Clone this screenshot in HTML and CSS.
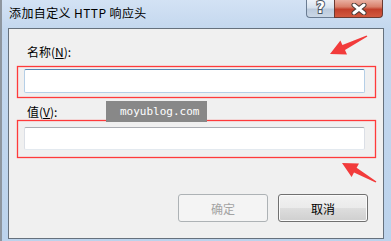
FILE: index.html
```html
<!DOCTYPE html>
<html lang="zh-CN">
<head>
    <meta charset="UTF-8">
    <title>添加自定义 HTTP 响应头</title>
    <link rel="stylesheet" href="styles.css">
</head>
<body>
    <div class="window">
        <div class="titlebar">
            <span class="title">添加自定义 HTTP 响应头</span>
            <div class="caption-buttons">
                <div class="help-btn"><span>?</span></div>
                <div class="close-btn">
                    <svg width="20" height="12" viewBox="0 0 20 12">
                        <path d="M5 2 L15 10 M15 2 L5 10" stroke="#4a3a36" stroke-width="5" stroke-linecap="round"/>
                        <path d="M5 2 L15 10 M15 2 L5 10" stroke="#ffffff" stroke-width="3" stroke-linecap="round"/>
                    </svg>
                </div>
            </div>
        </div>
        <div class="content">
            <div class="label label-name">名称(<u>N</u>):</div>
            <div class="textbox focused"></div>
            <div class="label label-value">值(<u>V</u>):</div>
            <div class="textbox"></div>
            <div class="button-row">
                <button class="btn" disabled>确定</button>
                <button class="btn">取消</button>
            </div>
        </div>

        <svg class="annotations" width="391" height="241" viewBox="0 0 391 241">
            <rect x="17.5" y="66.5" width="358" height="31" fill="none" stroke="#ff3a3a" stroke-width="1.3"/>
            <rect x="17.5" y="120.5" width="358" height="37" fill="none" stroke="#ff3a3a" stroke-width="1.3"/>
            <polygon fill="#f23b3b" points="330,54 347,54.5 345,50 367.4,36.6 366.6,35.4 342.4,45 340.4,40.4"/>
            <polygon fill="#f23b3b" points="342,163 359,163.5 356.6,167.8 376.4,181.4 375.6,182.6 354,172.4 351.6,177"/>
        </svg>
        <div class="watermark">moyublog.com</div>
    </div>
</body>
</html>
```

FILE: styles.css
```css
body {
    margin: 0;
    overflow: hidden;
    font-family: "Noto Sans CJK SC", "Noto Sans", sans-serif;
    font-size: 12px;
}
.window {
    position: relative;
    width: 391px;
    height: 241px;
    box-sizing: border-box;
    border-left: 2px solid #8e969f;
    background: linear-gradient(#d3e2f4, #c3d7ee 30px, #bcd3ec);
    display: flex;
    flex-direction: column;
}
.titlebar {
    height: 28px;
    display: flex;
    align-items: flex-start;
    padding-left: 7px;
}
.title {
    margin-top: 5px;
    line-height: 16px;
    letter-spacing: 0.4px;
    color: #000;
}
.caption-buttons {
    margin-left: auto;
    margin-right: 8px;
    display: flex;
}
.help-btn {
    width: 27px;
    height: 17px;
    border: 1px solid #6a7c92;
    border-top: none;
    border-right: none;
    border-radius: 0 0 0 4px;
    background: linear-gradient(#eef3f9, #d7e2ee 45%, #bccbdd 55%, #cad7e6);
    display: flex;
    justify-content: center;
    align-items: center;
}
.help-btn span {
    font-family: "DejaVu Sans", sans-serif;
    font-weight: bold;
    font-size: 15px;
    line-height: 15px;
    color: #fff;
    -webkit-text-stroke: 2px #4b5563;
    paint-order: stroke fill;
}
.close-btn {
    width: 47px;
    height: 17px;
    border: 1px solid #6b3a32;
    border-top: none;
    border-radius: 0 0 4px 0;
    background: linear-gradient(#e9b0a2, #d9806b 40%, #c2402b 55%, #d2593f);
    display: flex;
    justify-content: center;
    align-items: center;
}
.content {
    flex: 1;
    margin: 0 7px 2px 6px;
    border: 1px solid #66717d;
    background: #f0f0f0;
    padding: 15px 15px 0 15px;
}
.label {
    padding-left: 3px;
    line-height: 16px;
    color: #000;
}
.label u {
    text-decoration-color: #000;
}
.label-value {
    margin-top: 11px;
}
.textbox {
    width: 341px;
    height: 23px;
    box-sizing: border-box;
    background: #fff;
    border: 1px solid #dbdfe6;
    border-top-color: #abadb3;
    border-bottom-color: #e3e9ef;
    border-radius: 2px;
    margin-top: 7px;
}
.textbox.focused {
    height: 24px;
    margin-top: 9px;
    border-color: #b5cfe7;
    border-top-color: #5586b4;
}
.button-row {
    display: flex;
    justify-content: flex-end;
    gap: 10px;
    margin-top: 44px;
}
.btn {
    width: 90px;
    height: 28px;
    font-family: "Noto Sans CJK SC", sans-serif;
    font-size: 12px;
    color: #000;
    border: 1px solid #707070;
    border-radius: 3px;
    background: linear-gradient(#f2f2f2, #ebebeb 48%, #dddddd 52%, #cfcfcf);
    box-shadow: inset 0 0 0 1px #fbfbfb;
    padding: 0;
}
.btn:disabled {
    color: #a3a3a3;
    border-color: #adb2b5;
    background: #f4f4f4;
    box-shadow: none;
}
.annotations {
    position: absolute;
    left: -2px;
    top: 0;
}
.watermark {
    position: absolute;
    left: 104px;
    top: 101px;
    width: 101px;
    height: 21px;
    box-sizing: border-box;
    padding-left: 14px;
    background: #888888;
    color: #fff;
    font-family: "DejaVu Sans Mono", "Liberation Mono", monospace;
    font-size: 11px;
    line-height: 21px;
}
```
